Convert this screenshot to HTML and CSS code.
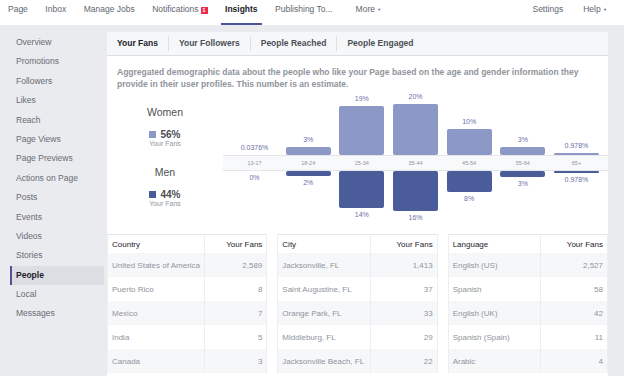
FILE: index.html
```html
<!DOCTYPE html>
<html>
	<head>
		<meta charset="utf-8" />
		<title>Insights - People</title>
		<link rel="stylesheet" href="styles.css">
	</head>
	<body>
		<div class="top-nav">
			<a class="nav-item">Page</a>
			<a class="nav-item">Inbox</a>
			<a class="nav-item">Manage Jobs</a>
			<a class="nav-item">Notifications<span class="badge">1</span></a>
			<a class="nav-item current">Insights</a>
			<a class="nav-item publishing">Publishing To...</a>
			<a class="nav-item">More <span class="caret">▼</span></a>
			<a class="nav-item settings">Settings</a>
			<a class="nav-item help">Help <span class="caret">▼</span></a>
		</div>
		<div class="page">
			<ul class="side-menu">
				<li>Overview</li>
				<li>Promotions</li>
				<li>Followers</li>
				<li>Likes</li>
				<li>Reach</li>
				<li>Page Views</li>
				<li>Page Previews</li>
				<li>Actions on Page</li>
				<li>Posts</li>
				<li>Events</li>
				<li>Videos</li>
				<li>Stories</li>
				<li class="active">People</li>
				<li>Local</li>
				<li>Messages</li>
			</ul>
			<div class="panel">
				<div class="tabs">
					<span class="tab current">Your Fans</span>
					<span class="tab">Your Followers</span>
					<span class="tab">People Reached</span>
					<span class="tab">People Engaged</span>
				</div>
				<p class="desc">Aggregated demographic data about the people who like your Page based on the age and gender information they provide in their user profiles. This number is an estimate.</p>
				<div class="demo">
					<div class="legend">
						<div class="sex">Women</div>
						<div class="stat"><i class="swatch women"></i>56%</div>
						<div class="stat-note">Your Fans</div>
						<div class="sex men-label">Men</div>
						<div class="stat"><i class="swatch men"></i>44%</div>
						<div class="stat-note">Your Fans</div>
					</div>
					<div class="chart">
						<div class="bars up">
							<div class="col"><span class="val">0.0376%</span><i class="bar" style="height:0px"></i></div>
							<div class="col"><span class="val">3%</span><i class="bar" style="height:8px"></i></div>
							<div class="col"><span class="val">19%</span><i class="bar" style="height:49px"></i></div>
							<div class="col"><span class="val">20%</span><i class="bar" style="height:51px"></i></div>
							<div class="col"><span class="val">10%</span><i class="bar" style="height:26px"></i></div>
							<div class="col"><span class="val">3%</span><i class="bar" style="height:8px"></i></div>
							<div class="col"><span class="val">0.978%</span><i class="bar" style="height:2px"></i></div>
						</div>
						<div class="bars ages">
							<span>13-17</span>
							<span>18-24</span>
							<span>25-34</span>
							<span>35-44</span>
							<span>45-54</span>
							<span>55-64</span>
							<span>65+</span>
						</div>
						<div class="bars down">
							<div class="col"><i class="bar" style="height:0px"></i><span class="val">0%</span></div>
							<div class="col"><i class="bar" style="height:5px"></i><span class="val">2%</span></div>
							<div class="col"><i class="bar" style="height:37px"></i><span class="val">14%</span></div>
							<div class="col"><i class="bar" style="height:40px"></i><span class="val">16%</span></div>
							<div class="col"><i class="bar" style="height:21px"></i><span class="val">8%</span></div>
							<div class="col"><i class="bar" style="height:6px"></i><span class="val">3%</span></div>
							<div class="col"><i class="bar" style="height:2px"></i><span class="val">0.978%</span></div>
						</div>
					</div>
				</div>
				<div class="tables">
					<table>
						<tr><th>Country</th><th class="num">Your Fans</th></tr>
						<tr><td>United States of America</td><td class="num">2,589</td></tr>
						<tr><td>Puerto Rico</td><td class="num">8</td></tr>
						<tr><td>Mexico</td><td class="num">7</td></tr>
						<tr><td>India</td><td class="num">5</td></tr>
						<tr><td>Canada</td><td class="num">3</td></tr>
					</table>
					<table>
						<tr><th>City</th><th class="num">Your Fans</th></tr>
						<tr><td>Jacksonville, FL</td><td class="num">1,413</td></tr>
						<tr><td>Saint Augustine, FL</td><td class="num">37</td></tr>
						<tr><td>Orange Park, FL</td><td class="num">33</td></tr>
						<tr><td>Middleburg, FL</td><td class="num">29</td></tr>
						<tr><td>Jacksonville Beach, FL</td><td class="num">22</td></tr>
					</table>
					<table>
						<tr><th>Language</th><th class="num">Your Fans</th></tr>
						<tr><td>English (US)</td><td class="num">2,527</td></tr>
						<tr><td>Spanish</td><td class="num">58</td></tr>
						<tr><td>English (UK)</td><td class="num">42</td></tr>
						<tr><td>Spanish (Spain)</td><td class="num">11</td></tr>
						<tr><td>Arabic</td><td class="num">4</td></tr>
					</table>
				</div>
			</div>
		</div>
	</body>
</html>
```
FILE: styles.css
```css
body {
	margin: 0;
	padding: 0;
	width: 624px;
	height: 376px;
	overflow: hidden;
	background-color: #e9ebee;
	font-family: "Liberation Sans", Arial, sans-serif;
	color: #4b4f56;
}
ul {
	list-style: none;
	padding: 0;
	margin: 0;
}
.top-nav {
	display: flex;
	height: 25px;
	padding: 0 13px 0 4px;
	box-sizing: border-box;
	background-color: #fff;
	font-size: 8.5px;
	color: #606770;
}
.nav-item {
	height: 23px;
	line-height: 19px;
	padding: 0 4px;
	margin-right: 9.5px;
	border-bottom: 2px solid transparent;
	white-space: nowrap;
	cursor: pointer;
}
.nav-item.current {
	color: #1d2129;
	font-weight: bold;
	border-bottom-color: #4f5398;
}
.nav-item.publishing {
	margin-right: 15px;
}
.nav-item.settings {
	margin-left: auto;
	margin-right: 12px;
}
.nav-item.help {
	margin-right: 0;
}
.badge {
	display: inline-block;
	width: 7px;
	height: 7px;
	margin-left: 2px;
	line-height: 7px;
	font-size: 6px;
	font-weight: bold;
	text-align: center;
	color: #fff;
	background-color: #f02849;
	vertical-align: 0;
}
.caret {
	font-size: 4px;
	vertical-align: 1px;
}
.page {
	display: flex;
	height: 351px;
}
.side-menu {
	width: 104px;
	padding: 8px 0 0 10px;
	box-sizing: border-box;
	font-size: 8.5px;
	color: #686c74;
}
.side-menu li {
	height: 19.4px;
	line-height: 19.4px;
	padding-left: 6px;
}
.side-menu li.active {
	padding-left: 4px;
	border-left: 2px solid #4f5398;
	background-color: #dcdee3;
	color: #1d2129;
	font-weight: bold;
}
.panel {
	width: 501px;
	margin: 7px 0 0 3px;
	background-color: #fff;
	overflow: hidden;
}
.tabs {
	display: flex;
	align-items: center;
	height: 23px;
	background-color: #f6f7f9;
	border-bottom: 1px solid #dddfe2;
	font-size: 8.5px;
	font-weight: bold;
	color: #4b4f56;
}
.tab {
	padding: 0 10px;
	line-height: 15px;
	border-left: 1px solid #dddfe2;
}
.tab:first-child {
	border-left: none;
}
.tab.current {
	color: #1d2129;
}
.desc {
	margin: 0;
	padding: 10px 10px 0;
	font-size: 8.5px;
	font-weight: bold;
	line-height: 12px;
	color: #90949c;
}
.demo {
	display: flex;
	height: 135px;
}
.legend {
	width: 116px;
	padding-top: 17px;
	text-align: center;
}
.sex {
	font-size: 10.5px;
	line-height: 11px;
	color: #4b4f56;
}
.men-label {
	margin-top: 19px;
}
.stat {
	margin-top: 11px;
	font-size: 10px;
	line-height: 11px;
	font-weight: bold;
	color: #4b4f56;
}
.stat-note {
	font-size: 7px;
	line-height: 8px;
	color: #90949c;
}
.swatch {
	display: inline-block;
	width: 7px;
	height: 7px;
	margin-right: 4px;
	vertical-align: 0;
}
.swatch.women {
	background-color: #8c98c5;
}
.swatch.men {
	background-color: #4b5c9b;
}
.chart {
	flex: 1;
}
.bars {
	display: grid;
	grid-template-columns: repeat(7, 1fr);
	column-gap: 8.6px;
	padding: 0 9px;
}
.col {
	display: flex;
	flex-direction: column;
	align-items: stretch;
}
.up {
	height: 65px;
}
.up .col {
	justify-content: flex-end;
}
.down {
	height: 54px;
}
.bar {
	display: block;
	border-radius: 2px;
}
.up .bar {
	background-color: #8c98c5;
}
.down .bar {
	background-color: #4b5c9b;
}
.val {
	font-size: 7px;
	line-height: 9px;
	text-align: center;
	color: #6a70a8;
}
.up .val {
	margin-bottom: 3px;
}
.down .val {
	margin-top: 2px;
}
.ages {
	height: 14px;
	line-height: 14px;
	border-top: 1px solid #e4e5e9;
	border-bottom: 1px solid #e4e5e9;
	background-color: #f8f9fa;
	font-size: 5.5px;
	text-align: center;
	color: #90949c;
}
.tables {
	display: grid;
	grid-template-columns: repeat(3, 1fr);
	column-gap: 10px;
	margin-top: 9px;
}
table {
	width: 100%;
	border-collapse: collapse;
	border-left: 1px solid #eceef1;
	border-right: 1px solid #eceef1;
	font-size: 8px;
}
th {
	height: 18px;
	padding: 0 4px;
	border-top: 1px solid #e5e6e9;
	text-align: left;
	font-weight: normal;
	color: #1d2129;
}
td {
	height: 24px;
	padding: 0 4px;
	color: #90949c;
	white-space: nowrap;
}
tr:nth-child(even) td {
	background-color: #f6f7f9;
}
.num {
	width: 58px;
	text-align: right;
	border-left: 1px solid #eceef1;
}
```
